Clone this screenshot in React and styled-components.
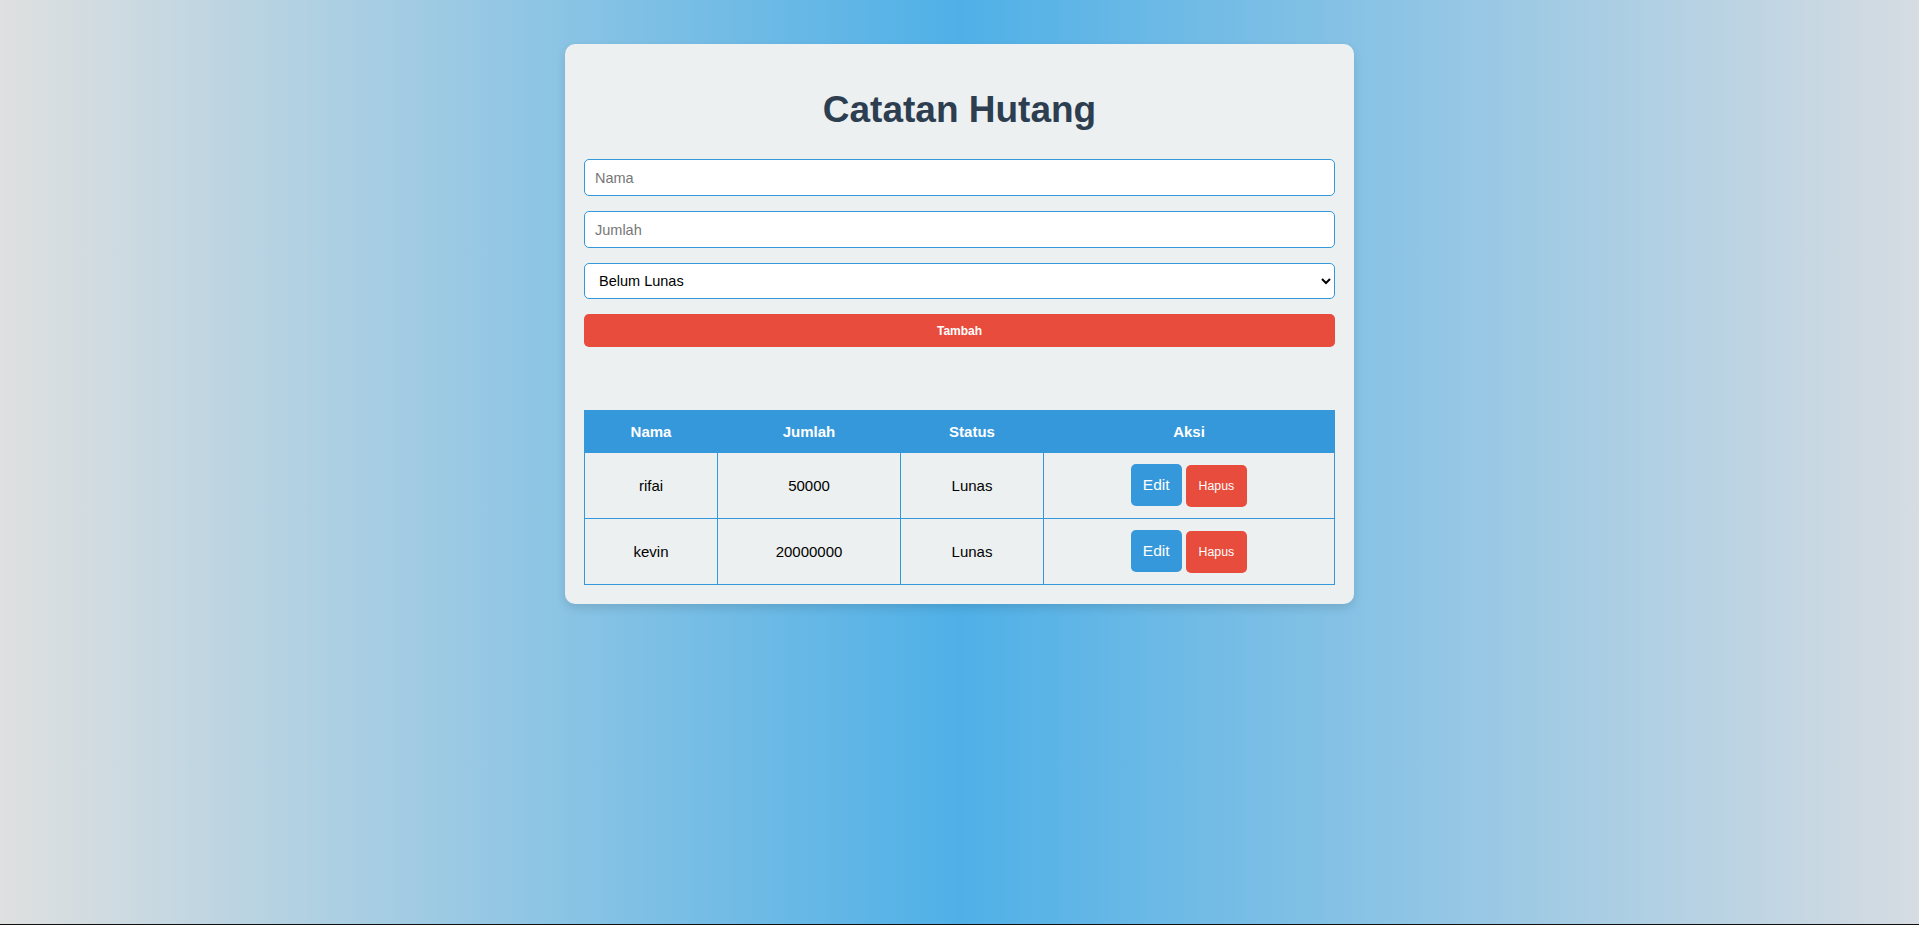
import React from "react";
import styled, { createGlobalStyle } from "styled-components";

const GlobalStyle = createGlobalStyle`
  html {
    background: #111;
  }
  body {
    margin: 0;
    height: calc(100vh - 1px);
    font-family: "Liberation Sans", Arial, sans-serif;
    background: linear-gradient(to right, #dfe0e0 0%, #4fb0e7 50%, #d6dce2 100%);
  }
`;

const Page = styled.div`
  display: flex;
  justify-content: center;
  padding-top: 44px;
`;

const Card = styled.div`
  box-sizing: border-box;
  width: 789px;
  padding: 20px 19px 19px;
  background: #ecf0f1;
  border-radius: 10px;
  box-shadow: 0 4px 10px rgba(0, 0, 0, 0.12);
`;

const Title = styled.h1`
  margin: 25px 0 28px;
  font-size: 37px;
  line-height: 42px;
  font-weight: bold;
  text-align: center;
  color: #2c3e50;
`;

const Form = styled.form`
  display: flex;
  flex-direction: column;
  gap: 15px;
  margin-bottom: 63px;
`;

const TextInput = styled.input`
  box-sizing: border-box;
  width: 100%;
  height: 37px;
  padding: 0 10px;
  border: 1px solid #3498db;
  border-radius: 5px;
  background: #fff;
  font-family: "Liberation Sans", Arial, sans-serif;
  font-size: 14.5px;
  color: #000;
  outline: none;
  &::placeholder {
    color: #777;
  }
`;

const Select = styled.select`
  box-sizing: border-box;
  width: 100%;
  height: 36px;
  padding: 0 10px;
  border: 1px solid #3498db;
  border-radius: 5px;
  background: #fff;
  font-family: "Liberation Sans", Arial, sans-serif;
  font-size: 14.5px;
  color: #000;
`;

const SubmitButton = styled.button`
  width: 100%;
  height: 33px;
  border: none;
  border-radius: 5px;
  background: #e74c3c;
  color: #fff;
  font-family: "Liberation Sans", Arial, sans-serif;
  font-size: 12px;
  font-weight: bold;
  cursor: pointer;
`;

const Table = styled.table`
  width: 100%;
  border-collapse: collapse;
  table-layout: fixed;
  font-family: "Liberation Sans", Arial, sans-serif;
`;

const HeadCell = styled.th`
  box-sizing: border-box;
  width: ${(p) => p.$w}px;
  padding: 12px;
  background: #3498db;
  color: #fff;
  font-size: 15px;
  font-weight: bold;
  text-align: center;
  border: 1px solid #3498db;
`;

const Cell = styled.td`
  padding: 11px 12px;
  text-align: center;
  font-size: 15px;
  color: #000;
  border: 1px solid #3498db;
`;

const ActionGroup = styled.div`
  display: flex;
  justify-content: center;
  align-items: flex-start;
  gap: 4px;
`;

const ActionButton = styled.button`
  display: inline-flex;
  align-items: center;
  justify-content: center;
  height: 42px;
  padding: 0 ${(p) => (p.$variant === "edit" ? 12 : 13)}px;
  margin-top: ${(p) => (p.$variant === "edit" ? 0 : 1)}px;
  border: none;
  border-radius: 5px;
  background: ${(p) => (p.$variant === "edit" ? "#3498db" : "#e74c3c")};
  color: #fff;
  font-family: "Liberation Sans", Arial, sans-serif;
  font-size: ${(p) => (p.$variant === "edit" ? 15.5 : 12.3)}px;
  cursor: pointer;
`;

const rows = [
  { nama: "rifai", jumlah: "50000", status: "Lunas" },
  { nama: "kevin", jumlah: "20000000", status: "Lunas" },
];

export default function App() {
  return (
    <>
      <GlobalStyle />
      <Page>
        <Card>
          <Title>Catatan Hutang</Title>
          <Form onSubmit={(e) => e.preventDefault()}>
            <TextInput type="text" placeholder="Nama" />
            <TextInput type="number" placeholder="Jumlah" />
            <Select defaultValue="Belum Lunas">
              <option>Belum Lunas</option>
              <option>Lunas</option>
            </Select>
            <SubmitButton type="submit">Tambah</SubmitButton>
          </Form>
          <Table>
            <thead>
              <tr>
                <HeadCell $w={133}>Nama</HeadCell>
                <HeadCell $w={183}>Jumlah</HeadCell>
                <HeadCell $w={143}>Status</HeadCell>
                <HeadCell $w={291}>Aksi</HeadCell>
              </tr>
            </thead>
            <tbody>
              {rows.map((r) => (
                <tr key={r.nama}>
                  <Cell>{r.nama}</Cell>
                  <Cell>{r.jumlah}</Cell>
                  <Cell>{r.status}</Cell>
                  <Cell>
                    <ActionGroup>
                      <ActionButton $variant="edit">Edit</ActionButton>
                      <ActionButton $variant="hapus">Hapus</ActionButton>
                    </ActionGroup>
                  </Cell>
                </tr>
              ))}
            </tbody>
          </Table>
        </Card>
      </Page>
    </>
  );
}
